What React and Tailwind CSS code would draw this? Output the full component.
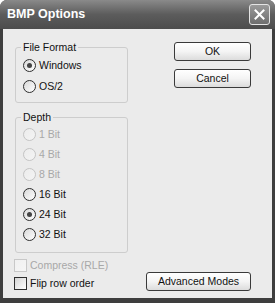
import React from 'react';

const font = { fontFamily: '"Liberation Sans", Arial, sans-serif' };

function Radio({ label, checked = false, disabled = false }) {
  return (
    <div className="flex h-[20px] items-center gap-[3px]">
      <span
        className={`flex h-[13px] w-[13px] items-center justify-center rounded-full border bg-gradient-to-br ${
          disabled
            ? 'border-[#c4c4c4] from-[#ececec] to-[#f4f4f4]'
            : 'border-[#2e2e2e] from-[#d8d8d8] to-[#ffffff]'
        }`}
      >
        {checked && <span className="h-[5px] w-[5px] rounded-full bg-[#444]" />}
      </span>
      <span className={`text-[10.5px] leading-none ${disabled ? 'text-[#a8a8a8]' : 'text-[#111]'}`}>{label}</span>
    </div>
  );
}

function Check({ label, disabled = false }) {
  return (
    <div className="-ml-px flex h-[18px] items-center gap-[3px]">
      <span
        className={`h-[13px] w-[13px] border bg-gradient-to-br ${
          disabled ? 'border-[#c8c8c8] from-[#f0f0f0] to-[#f6f6f6]' : 'border-[#2e2e2e] from-[#d4d4d4] to-[#ffffff]'
        }`}
      />
      <span className={`text-[10.5px] leading-none ${disabled ? 'text-[#a8a8a8]' : 'text-[#111]'}`}>{label}</span>
    </div>
  );
}

function Group({ title, className, children }) {
  return (
    <div className={`relative rounded-[3px] border border-[#cdcdcd] ${className}`}>
      <span className="absolute -top-[7px] left-[5px] bg-[#ebebeb] px-[2px] text-[10.5px] leading-[13px] text-[#111]">
        {title}
      </span>
      {children}
    </div>
  );
}

function Btn({ children, className = '' }) {
  return (
    <button
      className={`flex h-[19px] items-center justify-center rounded-[3px] border border-[#3a3a3a] bg-gradient-to-b from-[#ffffff] via-[#f4f4f4] to-[#dcdcdc] text-[10.5px] leading-none text-[#111] ${className}`}
    >
      {children}
    </button>
  );
}

export default function App() {
  return (
    <div className="h-[303px] w-[275px] bg-white" style={font}>
      <div className="flex h-full w-full flex-col overflow-hidden rounded-t-[7px] bg-[#3e3e3e]">
        <div className="flex h-[29px] shrink-0 items-center justify-between bg-gradient-to-b from-[#8a8a8a] via-[#5c5c5c] to-[#4c4c4c] pl-[7px] pr-[5px]">
          <span className="text-[12.5px] font-bold text-white">BMP Options</span>
          <span className="flex h-[21px] w-[21px] items-center justify-center rounded-[3px] border border-[#e4e4e4] bg-gradient-to-b from-[#9a9a9a] to-[#6e6e6e]">
            <svg width="11" height="11" viewBox="0 0 11 11">
              <path d="M1.5 1.5 L9.5 9.5 M9.5 1.5 L1.5 9.5" stroke="#fff" strokeWidth="2" strokeLinecap="square" />
            </svg>
          </span>
        </div>
        <div className="mx-[3px] mb-[5px] flex flex-1 justify-between bg-[#ebebeb] pl-[12px] pr-[21px]">
          <div className="flex w-[113px] flex-col pt-[18px]">
            <Group title="File Format" className="h-[56px] pl-[7px] pt-[7px]">
              <div className="flex flex-col gap-px">
                <Radio label="Windows" checked />
                <Radio label="OS/2" />
              </div>
            </Group>
            <Group title="Depth" className="mt-[14px] h-[136px] pl-[7px] pt-[6px]">
              <Radio label="1 Bit" disabled />
              <Radio label="4 Bit" disabled />
              <Radio label="8 Bit" disabled />
              <Radio label="16 Bit" />
              <Radio label="24 Bit" checked />
              <Radio label="32 Bit" />
            </Group>
            <div className="mt-[3px]">
              <Check label="Compress (RLE)" disabled />
              <Check label="Flip row order" />
            </div>
          </div>
          <div className="flex flex-col items-end pb-[7px] pt-[13px]">
            <Btn className="w-[77px]">OK</Btn>
            <Btn className="mt-[8px] w-[77px]">Cancel</Btn>
            <Btn className="mt-auto w-[105px]">Advanced Modes</Btn>
          </div>
        </div>
      </div>
    </div>
  );
}
